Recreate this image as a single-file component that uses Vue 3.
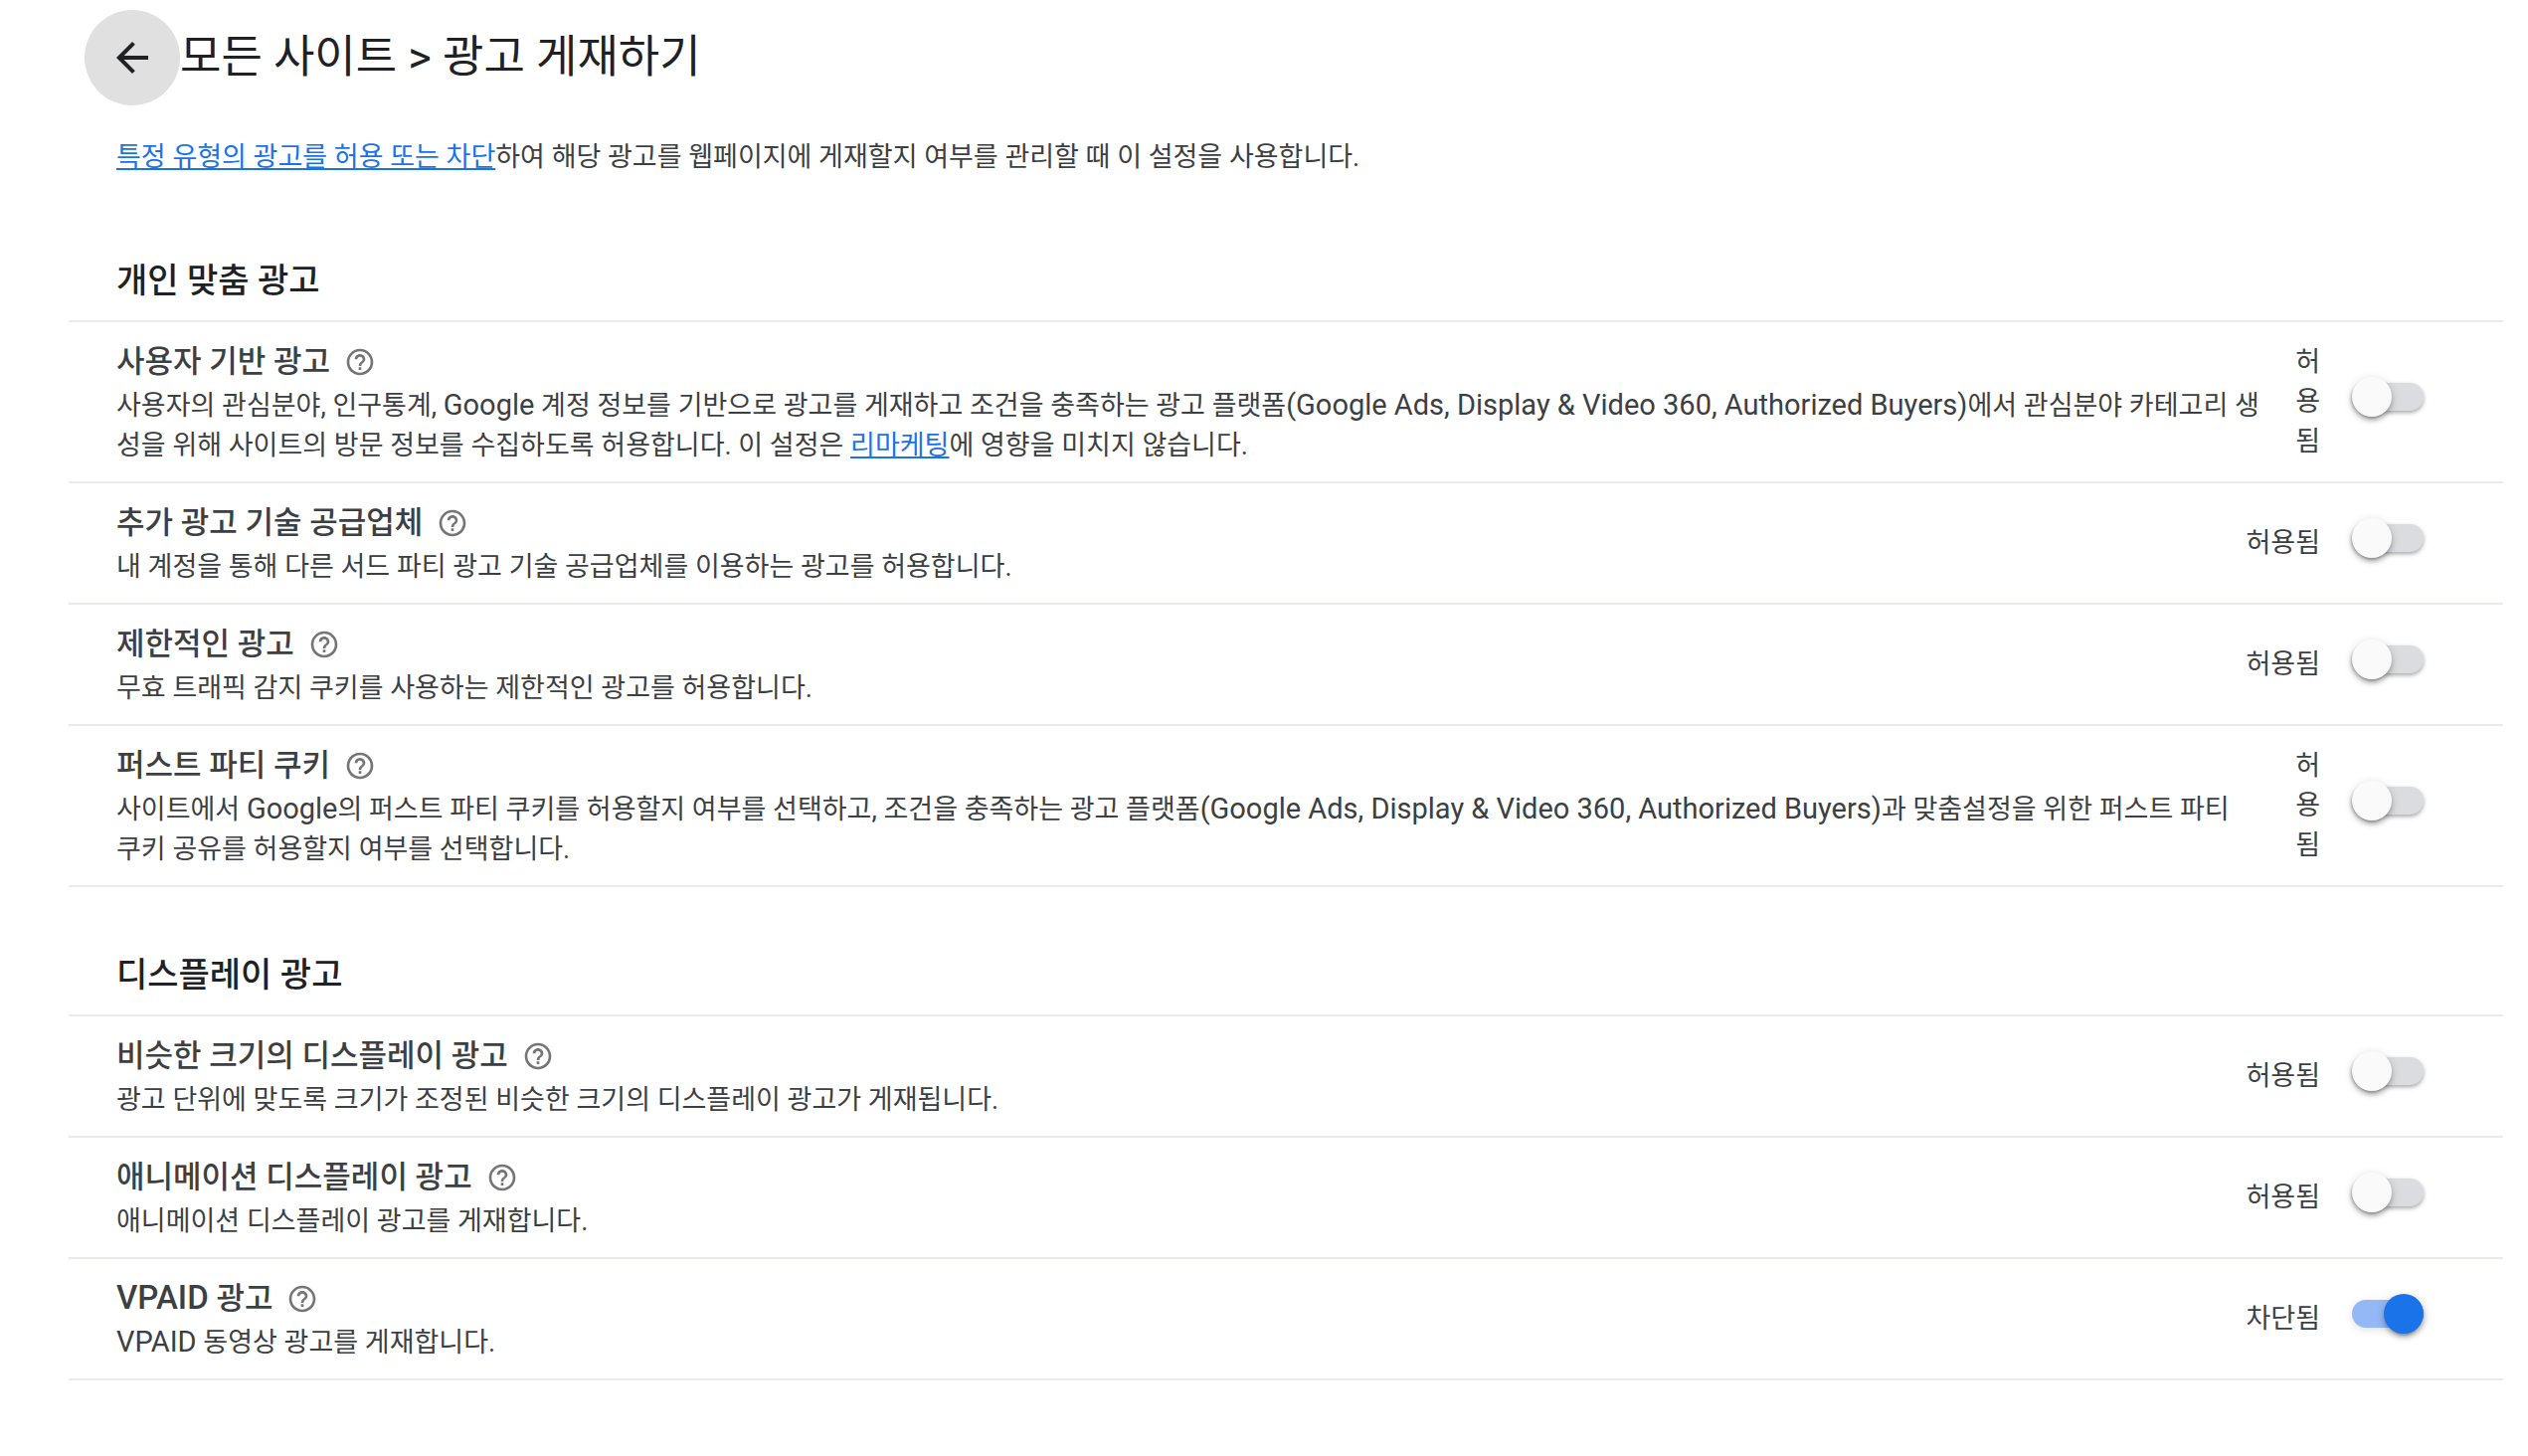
<script setup>
import { reactive } from 'vue';

const sections = reactive([
  {
    title: '개인 맞춤 광고',
    items: [
      {
        id: 'user-based',
        title: '사용자 기반 광고',
        text: '사용자의 관심분야, 인구통계, Google 계정 정보를 기반으로 광고를 게재하고 조건을 충족하는 광고 플랫폼(Google Ads, Display & Video 360, Authorized Buyers)에서 관심분야 카테고리 생성을 위해 사이트의 방문 정보를 수집하도록 허용합니다. 이 설정은 ',
        link: '리마케팅',
        after: '에 영향을 미치지 않습니다.',
        blocked: false,
      },
      {
        id: 'ad-tech',
        title: '추가 광고 기술 공급업체',
        text: '내 계정을 통해 다른 서드 파티 광고 기술 공급업체를 이용하는 광고를 허용합니다.',
        blocked: false,
      },
      {
        id: 'limited',
        title: '제한적인 광고',
        text: '무효 트래픽 감지 쿠키를 사용하는 제한적인 광고를 허용합니다.',
        blocked: false,
      },
      {
        id: 'first-party',
        title: '퍼스트 파티 쿠키',
        text: '사이트에서 Google의 퍼스트 파티 쿠키를 허용할지 여부를 선택하고, 조건을 충족하는 광고 플랫폼(Google Ads, Display & Video 360, Authorized Buyers)과 맞춤설정을 위한 퍼스트 파티 쿠\u2060키 공유를 허용할지 여부를 선택합니다.',
        blocked: false,
      },
    ],
  },
  {
    title: '디스플레이 광고',
    items: [
      {
        id: 'similar-size',
        title: '비슷한 크기의 디스플레이 광고',
        text: '광고 단위에 맞도록 크기가 조정된 비슷한 크기의 디스플레이 광고가 게재됩니다.',
        blocked: false,
      },
      {
        id: 'animated',
        title: '애니메이션 디스플레이 광고',
        text: '애니메이션 디스플레이 광고를 게재합니다.',
        blocked: false,
      },
      {
        id: 'vpaid',
        title: 'VPAID 광고',
        text: 'VPAID 동영상 광고를 게재합니다.',
        blocked: true,
      },
    ],
  },
]);

// latin words are set a little larger than the hangul around them
const split = (text) => {
  return text.split(/(\(?[A-Za-z][A-Za-z0-9,& ]*[A-Za-z0-9]\)?)/).filter((part) => !!part);
};
const isLatin = (part) => /[A-Za-z]/.test(part);
</script>

<template>
  <main class="page">
    <header class="header">
      <button class="back" type="button" aria-label="뒤로">
        <svg viewBox="0 0 24 24">
          <path d="M20 11H7.83l5.59-5.59L12 4l-8 8 8 8 1.41-1.41L7.83 13H20v-2z" />
        </svg>
      </button>
      <h1>모든 사이트 &gt; 광고 게재하기</h1>
    </header>
    <p class="intro">
      <a href="#">특정 유형의 광고를 허용 또는 차단</a>하여 해당 광고를 웹페이지에 게재할지 여부를 관리할 때 이 설정을 사용합니다.
    </p>
    <section class="section" v-for="section in sections" :key="section.title">
      <h2>{{ section.title }}</h2>
      <ul class="list">
        <li class="row" v-for="item in section.items" :key="item.id">
          <div class="info">
            <div class="title">
              <label :for="item.id"><span v-for="part in split(item.title)" :class="{ latin: isLatin(part) }">{{ part }}</span></label>
              <button class="help" type="button" aria-label="도움말">
                <svg viewBox="0 0 24 24">
                  <path
                    d="M11 18h2v-2h-2v2zm1-16C6.48 2 2 6.48 2 12s4.48 10 10 10 10-4.48 10-10S17.52 2 12 2zm0 18c-4.41 0-8-3.59-8-8s3.59-8 8-8 8 3.59 8 8-3.59 8-8 8zm0-14c-2.21 0-4 1.79-4 4h2c0-1.1.9-2 2-2s2 .9 2 2c0 2-3 1.75-3 5h2c0-2.25 3-2.5 3-5 0-2.21-1.79-4-4-4z"
                  />
                </svg>
              </button>
            </div>
            <p class="text"><span v-for="part in split(item.text)" :class="{ latin: isLatin(part) }">{{ part }}</span><a v-if="item.link" href="#">{{ item.link }}</a>{{ item.after }}</p>
          </div>
          <div class="status">{{ item.blocked ? '차단됨' : '허용됨' }}</div>
          <input :id="item.id" class="toggle" type="checkbox" role="switch" v-model="item.blocked" />
        </li>
      </ul>
    </section>
  </main>
</template>

<style>
body {
  margin: 0;
  background-color: #fff;
}
</style>

<style scoped>
.page {
  padding: 10px 25px 76px 69px;
  font-family: Roboto, 'Noto Sans CJK KR', sans-serif;
  font-size: 27px;
  line-height: 40px;
  color: #3c4043;
}
h1,
h2,
p,
ul {
  margin: 0;
  padding: 0;
}
a {
  color: #1a73e8;
  text-decoration: underline;
}
button {
  padding: 0;
  border: none;
  background: none;
  cursor: pointer;
}
svg {
  display: block;
}
.header {
  display: flex;
  align-items: center;
  padding-left: 16px;
}
.back {
  display: flex;
  align-items: center;
  justify-content: center;
  width: 96px;
  height: 96px;
  border-radius: 50%;
  background-color: #e0e0e0;
}
.back svg {
  width: 48px;
  height: 48px;
  fill: #202124;
}
h1 {
  font-size: 45px;
  line-height: 56px;
  font-weight: 400;
  color: #202124;
}
.intro {
  padding: 32px 48px 16px;
}
.section {
  padding-top: 48px;
}
h2 {
  padding: 16px 48px;
  font-size: 34px;
  line-height: 48px;
  font-weight: 500;
  color: #202124;
}
.list {
  list-style: none;
  border-top: 2px solid #e8eaed;
}
.row {
  display: flex;
  align-items: center;
  padding: 16px 80px 16px 48px;
  border-bottom: 2px solid #e8eaed;
}
.info {
  margin-right: auto;
}
.title {
  display: flex;
  align-items: center;
  gap: 14px;
  font-size: 31px;
  line-height: 48px;
  font-weight: 500;
}
.latin {
  font-size: 29px;
  line-height: 1;
}
.title .latin {
  font-size: 33px;
}
.help svg {
  width: 32px;
  height: 32px;
  fill: #757575;
}
/* the label gives way to long descriptions and wraps one letter per line */
.status {
  flex-shrink: 999;
  margin: 0 32px;
}
.toggle {
  appearance: none;
  flex-shrink: 0;
  display: flex;
  align-items: center;
  width: 72px;
  height: 28px;
  margin: 0 0 10px;
  border-radius: 14px;
  background-color: #dadce0;
  box-shadow: 0 2px 4px rgba(0, 0, 0, 0.35);
  cursor: pointer;
}
.toggle::before {
  content: '';
  width: 40px;
  height: 40px;
  flex-shrink: 0;
  border-radius: 50%;
  background-color: #fafafa;
  box-shadow:
    0 6px 2px -4px rgba(0, 0, 0, 0.2),
    0 4px 4px rgba(0, 0, 0, 0.2),
    0 2px 10px rgba(0, 0, 0, 0.16);
}
.toggle:checked {
  justify-content: flex-end;
  background-color: #94b8f5;
  box-shadow: 0 2px 8px rgba(0, 0, 0, 0.12);
}
.toggle:checked::before {
  background-color: #1a73e8;
}
</style>
